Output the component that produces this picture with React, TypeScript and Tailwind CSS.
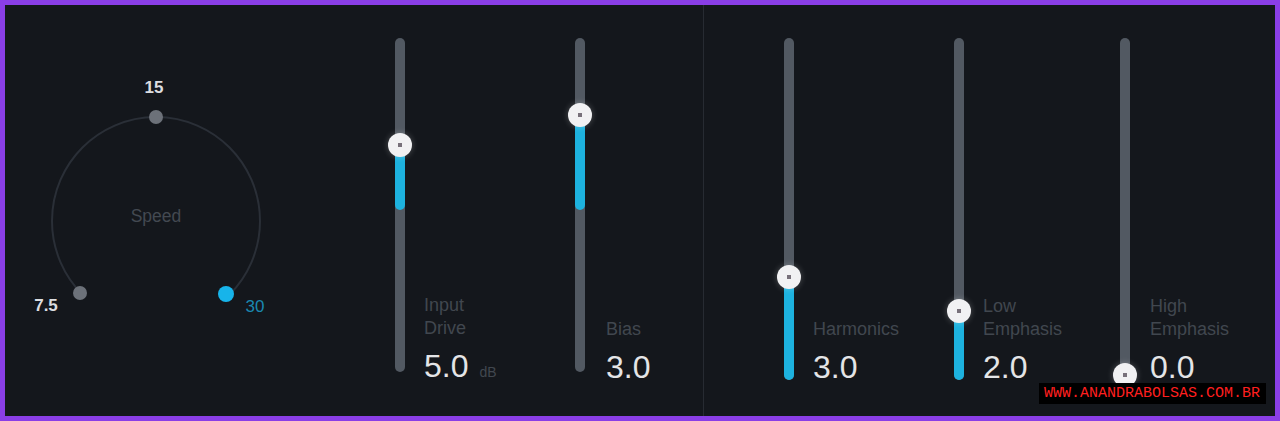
import React from 'react';

type SliderProps = {
    label: string[];
    value: string;
    unit?: string;
    trackHeight: number;
    thumb: number; // thumb centre, px from track top
    fillFrom?: number; // fill spans thumb..fillFrom (px from track top)
    gap: number;
    width?: string;
};

const Slider: React.FC<SliderProps> = ({ label, value, unit, trackHeight, thumb, fillFrom, gap, width }) => {
    const fillTop = fillFrom !== undefined ? Math.min(thumb, fillFrom) : 0;
    const fillHeight = fillFrom !== undefined ? Math.abs(fillFrom - thumb) : 0;
    return (
        <div className={`flex h-full shrink-0 ${width ?? 'flex-1'}`}>
            <div className="pt-[33px]">
                <div className="relative w-[10px] rounded-full bg-[#525962]" style={{ height: trackHeight }}>
                    {fillHeight > 0 && (
                        <div
                            className="absolute left-0 w-full rounded-full bg-[#1db2df]"
                            style={{ top: fillTop, height: fillHeight }}
                        />
                    )}
                    <div
                        className="absolute left-1/2 -translate-x-1/2 w-[24px] h-[24px] rounded-full bg-[#f1f1f3] shadow-[0_0_6px_rgba(255,255,255,0.25)] flex items-center justify-center"
                        style={{ top: thumb - 12 }}
                    >
                        <div className="w-[4px] h-[4px] bg-[#77707a]" />
                    </div>
                </div>
            </div>
            <div className="flex flex-col justify-end pb-[33px]" style={{ marginLeft: gap }}>
                <div className="text-[18px] leading-[23px] text-[#41474f]">
                    {label.map((l) => (
                        <div key={l}>{l}</div>
                    ))}
                </div>
                <div className="mt-[10px] flex items-baseline whitespace-nowrap">
                    <span className="text-[32px] leading-8 text-[#e4e5e7]">{value}</span>
                    {unit && <span className="ml-[11px] text-[14px] text-[#41474f]">{unit}</span>}
                </div>
            </div>
        </div>
    );
};

const SpeedKnob: React.FC = () => {
    // circle centre (156,221) r=104, in page coordinates
    const cx = 156, cy = 221, r = 104;
    const d = r * Math.SQRT1_2;
    return (
        <svg width={390} height={411} viewBox="5 5 390 411" className="block">
            <path
                d={`M ${cx - d} ${cy + d} A ${r} ${r} 0 1 1 ${cx + d} ${cy + d}`}
                fill="none"
                stroke="#2a2f37"
                strokeWidth={2}
            />
            <circle cx={cx} cy={cy - r} r={7} fill="#6c7179" />
            <circle cx={80} cy={293} r={7} fill="#6c7179" />
            <circle cx={226} cy={294} r={8} fill="#17b4ea" />
            <text x={154} y={93} textAnchor="middle" fontSize={17} fontWeight={700} fill="#dcdde0">15</text>
            <text x={46} y={311} textAnchor="middle" fontSize={17} fontWeight={700} fill="#dcdde0">7.5</text>
            <text x={255} y={312} textAnchor="middle" fontSize={17} fill="#1a88b0">30</text>
            <text x={156} y={222} textAnchor="middle" fontSize={17.5} fill="#434951">Speed</text>
        </svg>
    );
};

const App: React.FC = () => {
    return (
        <div
            className="relative flex w-full h-[421px] border-[5px] border-[#8a3ee6] bg-[#14171c] overflow-hidden"
            style={{ fontFamily: '"Liberation Sans", Arial, sans-serif' }}
        >
            {/* Speed knob */}
            <div className="w-[390px] shrink-0">
                <SpeedKnob />
            </div>

            {/* Left sliders */}
            <Slider label={['Input', 'Drive']} value="5.0" unit="dB" trackHeight={334} thumb={107} fillFrom={172} gap={19} width="w-[180px]" />
            <Slider label={['Bias']} value="3.0" trackHeight={334} thumb={77} fillFrom={172} gap={21} width="w-[128px]" />

            <div className="w-px shrink-0 bg-[#272b32]" />

            {/* Right sliders */}
            <div className="flex flex-1 pl-[80px]">
                <Slider label={['Harmonics']} value="3.0" trackHeight={342} thumb={239} fillFrom={342} gap={19} width="w-[170px]" />
                <Slider label={['Low', 'Emphasis']} value="2.0" trackHeight={342} thumb={273} fillFrom={342} gap={19} width="w-[166px]" />
                <Slider label={['High', 'Emphasis']} value="0.0" trackHeight={342} thumb={337} gap={20} />
            </div>

            {/* watermark */}
            <div className="absolute right-[9px] bottom-[12px] h-[21px] w-[227px] bg-black px-[5px] flex items-center">
                <span
                    className="text-[15px] leading-[21px] text-[#ff1f1f] whitespace-nowrap"
                    style={{ fontFamily: '"Liberation Mono", monospace' }}
                >
                    WWW.ANANDRABOLSAS.COM.BR
                </span>
            </div>
        </div>
    );
};

export default App;
